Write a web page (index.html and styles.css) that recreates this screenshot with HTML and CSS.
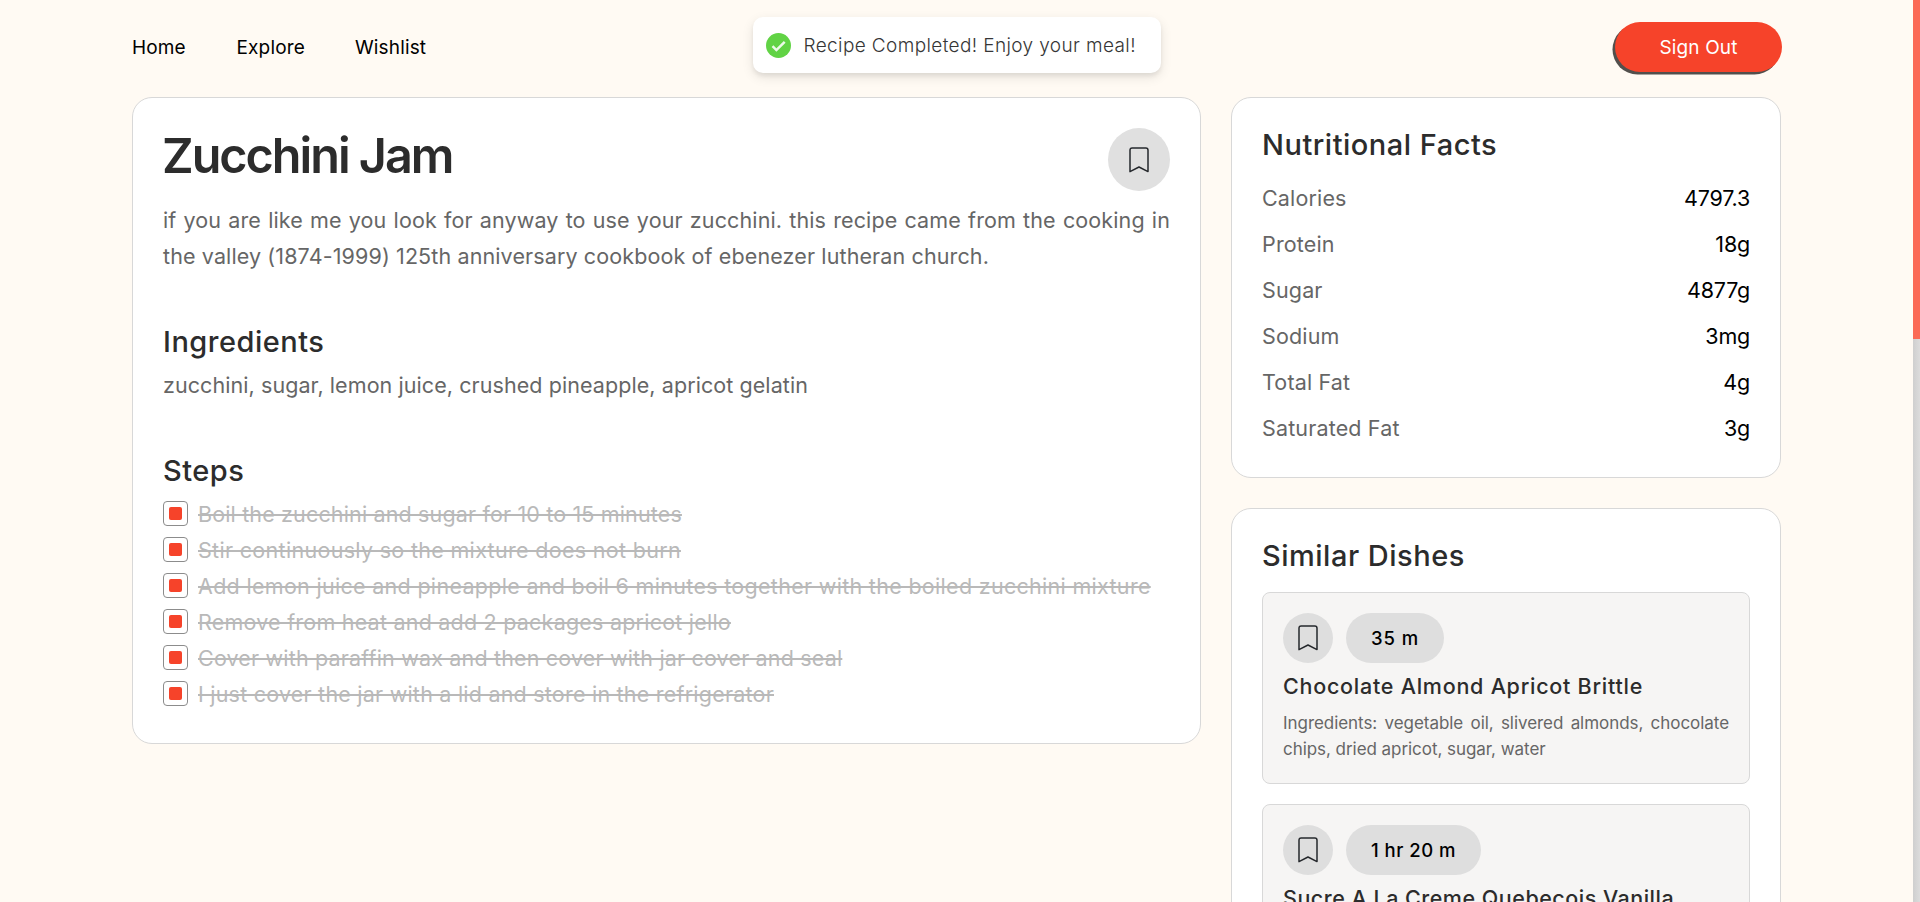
FILE: index.html
```
<!DOCTYPE html>
<html lang="en">
<head>
<meta charset="utf-8">
<title>Zucchini Jam</title>
<link rel="stylesheet" href="styles.css">
</head>
<body>
<svg class="sprite" aria-hidden="true">
  <symbol id="bookmark" viewBox="0 0 20 26"><path d="M1 24.6V3.2Q1 1 3.2 1H16.8Q19 1 19 3.2V24.6L10 20Z" fill="none" stroke="#25282c" stroke-width="1.5" stroke-linejoin="round"/></symbol>
</svg>
<div class="page">
  <header class="header">
    <nav class="nav">
      <a>Home</a><a>Explore</a><a>Wishlist</a>
    </nav>
    <button class="sign-out">Sign Out</button>
  </header>
  <main class="columns">
    <section class="card recipe">
      <div class="recipe-head">
        <h1>Zucchini Jam</h1>
        <button class="save"><svg width="20" height="26"><use href="#bookmark"/></svg></button>
      </div>
      <p class="body description">if you are like me you look for anyway to use your zucchini. this recipe came from the cooking in the valley (1874-1999) 125th anniversary cookbook of ebenezer lutheran church.</p>
      <h2 class="h-ingredients">Ingredients</h2>
      <p class="body ingredients">zucchini, sugar, lemon juice, crushed pineapple, apricot gelatin</p>
      <h2 class="h-steps">Steps</h2>
      <ul class="steps">
        <li><i class="check"></i><span>Boil the zucchini and sugar for 10 to 15 minutes</span></li>
        <li><i class="check"></i><span>Stir continuously so the mixture does not burn</span></li>
        <li><i class="check"></i><span>Add lemon juice and pineapple and boil 6 minutes together with the boiled zucchini mixture</span></li>
        <li><i class="check"></i><span>Remove from heat and add 2 packages apricot jello</span></li>
        <li><i class="check"></i><span>Cover with paraffin wax and then cover with jar cover and seal</span></li>
        <li><i class="check"></i><span>I just cover the jar with a lid and store in the refrigerator</span></li>
      </ul>
    </section>
    <aside class="side">
      <section class="card facts">
        <h2>Nutritional Facts</h2>
        <dl>
          <div><dt>Calories</dt><dd>4797.3</dd></div>
          <div><dt>Protein</dt><dd>18g</dd></div>
          <div><dt>Sugar</dt><dd>4877g</dd></div>
          <div><dt>Sodium</dt><dd>3mg</dd></div>
          <div><dt>Total Fat</dt><dd>4g</dd></div>
          <div><dt>Saturated Fat</dt><dd>3g</dd></div>
        </dl>
      </section>
      <section class="card similar">
        <h2>Similar Dishes</h2>
        <article class="dish">
          <div class="meta"><button class="save small"><svg width="20" height="26"><use href="#bookmark"/></svg></button><span class="time short">35 m</span></div>
          <h3>Chocolate Almond Apricot Brittle</h3>
          <p>Ingredients: vegetable oil, slivered almonds, chocolate chips, dried apricot, sugar, water</p>
        </article>
        <article class="dish">
          <div class="meta"><button class="save small"><svg width="20" height="26"><use href="#bookmark"/></svg></button><span class="time">1 hr 20 m</span></div>
          <h3 class="long">Sucre A La Creme Quebecois Vanilla</h3>
        </article>
      </section>
    </aside>
  </main>
</div>
<div class="toast">
  <svg width="25" height="25" viewBox="0 0 25 25"><circle cx="12.5" cy="12.5" r="12.5" fill="#61d345"/><path d="M6.5 13.2L10.4 17.1L18.7 8.8" fill="none" stroke="#fff" stroke-opacity=".88" stroke-width="2.5"/></svg>
  <span>Recipe Completed! Enjoy your meal!</span>
</div>
<div class="scroll-track"><div class="scroll-thumb"></div></div>
</body>
</html>
```
FILE: styles.css
```
* { box-sizing: border-box; }
html, body { height: 100%; }
body {
  margin: 0;
  overflow: hidden;
  background: #fffaf3;
  color: #000;
  font-family: Inter, "Liberation Sans", sans-serif;
}
h1, h2, h3, p, ul, dl, dd { margin: 0; padding: 0; }
button { border: 0; padding: 0; font: inherit; }
.sprite { display: none; }

.page { width: 1650px; height: 902px; margin-left: 132px; overflow: hidden; }
.header {
  display: flex;
  justify-content: space-between;
  align-items: center;
  height: 97px;
  padding: 22px 0 25px;
}
.nav { display: flex; font-size: 19px; line-height: 24px; padding-top: 2px; letter-spacing: .15px; }
.nav a:nth-child(1) { width: 104.5px; }
.nav a:nth-child(2) { width: 118.5px; }
.sign-out {
  width: 167px;
  height: 50px;
  padding-top: 1px;
  border-radius: 25px;
  background: #f6432a;
  color: #fff;
  font-size: 19px;
  letter-spacing: .15px;
  box-shadow: -2.5px 2.5px 0 #524f4c;
}

.columns { display: flex; align-items: flex-start; gap: 30px; }
.card {
  border: 1px solid #d8d8d8;
  border-radius: 20px;
  background: #fff;
  padding: 30px;
}
.recipe { width: 1069px; padding-bottom: 31px; }
.side { width: 550px; display: flex; flex-direction: column; gap: 30px; }
.recipe-head { display: flex; justify-content: space-between; align-items: flex-start; }
.save {
  display: flex;
  align-items: center;
  justify-content: center;
  width: 62px;
  height: 63px;
  border-radius: 50%;
  background: #e0e0e0;
}
.small { width: 50px; height: 50px; background: #dedede; }
h1 {
  margin-left: -1px;
  color: #2c2c2c;
  font-size: 48.5px;
  line-height: 55px;
  font-weight: 600;
  letter-spacing: -2px;
}
h2 {
  color: #2c2c2c;
  font-size: 29px;
  line-height: 40px;
  font-weight: 500;
  letter-spacing: .5px;
}
.body {
  color: #666;
  font-size: 21.5px;
  line-height: 36px;
  letter-spacing: .12px;
}
.description { margin-top: 11px; text-align: justify; }
.h-ingredients, .h-steps { margin-top: 47.5px; }
.ingredients, .steps { margin-top: 5.5px; }
.ingredients { letter-spacing: .076px; }
.steps {
  list-style: none;
  color: #b9b9b9;
  font-size: 21.5px;
  line-height: 36px;
  letter-spacing: .22px;
}
.steps li { display: flex; align-items: center; gap: 10px; }
.steps span { text-decoration: line-through; text-decoration-thickness: 2px; }
.steps li:nth-child(1) { letter-spacing: .15px; }
.steps li:nth-child(2) { letter-spacing: .31px; }
.steps li:nth-child(3) { letter-spacing: .3px; }
.steps li:nth-child(5) { letter-spacing: .17px; }
.check {
  width: 25px;
  height: 25px;
  margin-top: -1px;
  border: 1px solid #8c8c8c;
  border-radius: 4px;
  padding: 5px;
}
.check::before {
  content: "";
  display: block;
  width: 13px;
  height: 13px;
  border-radius: 2px;
  background: #f6432a;
}

.facts { padding-top: 26.5px; padding-bottom: 30.5px; }
.similar { padding-top: 27px; }
dl { display: grid; gap: 10px; margin-top: 15.5px; font-size: 21.5px; line-height: 36px; }
dl div { display: flex; justify-content: space-between; }
dt { color: #666; letter-spacing: .15px; }
dd { letter-spacing: -.2px; }

.dish {
  height: 192px;
  margin-top: 16px;
  padding: 20px;
  border: 1px solid #d8d8d8;
  border-radius: 8px;
  background: #f6f5f4;
}
.dish + .dish { margin-top: 20px; }
.meta { display: flex; gap: 13px; }
.time {
  height: 50px;
  padding: 0 25px;
  border-radius: 25px;
  background: #dedede;
  font-size: 18.5px;
  line-height: 50px;
  font-weight: 500;
  letter-spacing: .5px;
}
.short { letter-spacing: .9px; }
h3 {
  margin-top: 7px;
  color: #2c2c2c;
  font-size: 21.5px;
  line-height: 32px;
  font-weight: 500;
  letter-spacing: .75px;
  white-space: nowrap;
}
.long { letter-spacing: .5px; }
.dish p {
  margin-top: 8.5px;
  color: #666;
  font-size: 17px;
  line-height: 26px;
  letter-spacing: -.05px;
  text-align: justify;
}

.toast {
  position: absolute;
  left: 753px;
  top: 17px;
  width: 408px;
  height: 56px;
  display: flex;
  align-items: center;
  gap: 12.5px;
  padding-left: 13px;
  border-radius: 10px;
  background: #fff;
  color: #363636;
  font-size: 19px;
  font-weight: 300;
  letter-spacing: .38px;
  box-shadow: 0 4px 12px rgba(0,0,0,.1), 0 3px 4px rgba(0,0,0,.06);
}
.scroll-track {
  position: absolute;
  right: 0;
  top: 0;
  width: 7px;
  height: 100%;
  background: linear-gradient(90deg, #cfcfcf, #dcdcdc);
}
.scroll-thumb { height: 339px; background: #fb6a56; }
```
